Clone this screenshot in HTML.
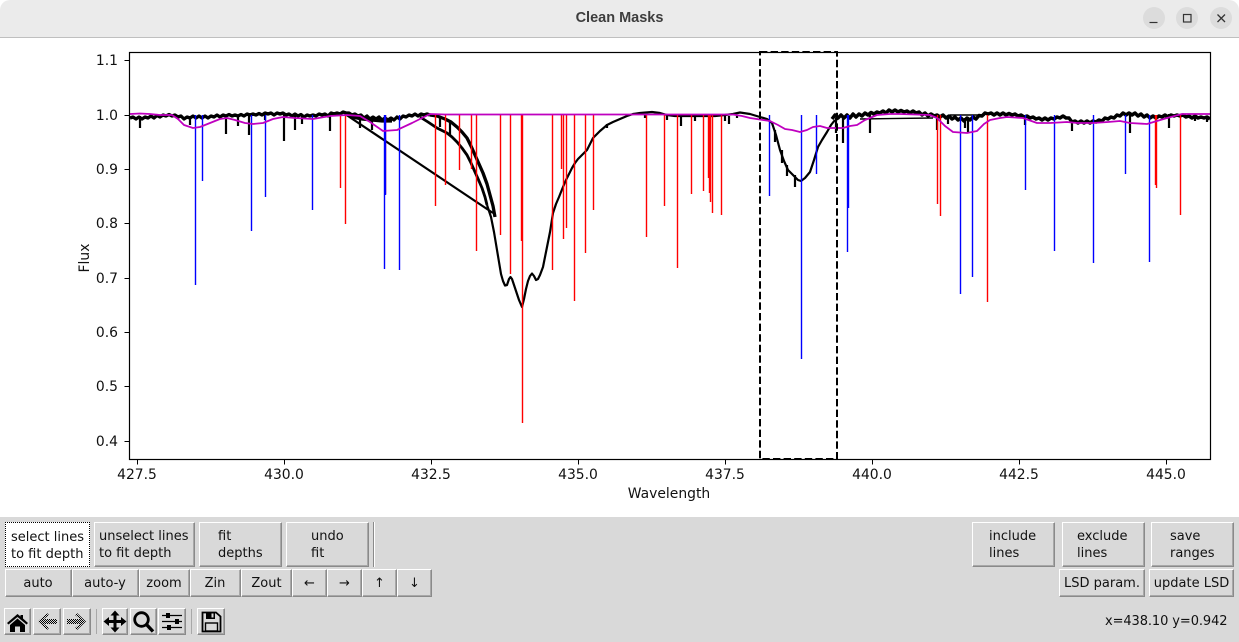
<!DOCTYPE html>
<html><head><meta charset="utf-8"><title>Clean Masks</title>
<style>
html,body{margin:0;padding:0;width:1239px;height:642px;overflow:hidden;background:#fff}
#t{position:absolute;left:0;top:0;width:1239px;height:37px;background:#ebebeb;border-bottom:1px solid #bfbfbf;border-radius:10px 10px 0 0;box-sizing:content-box}
#t span{position:absolute;left:0;width:1239px;top:10px;text-align:center;font:bold 14.500px "Liberation Sans",sans-serif;color:#3d3d3d}
#p{position:absolute;left:0;top:517px;width:1239px;height:125px;background:#d9d9d9}
.b{position:absolute;box-sizing:border-box;background:#d9d9d9;border:1px solid;border-color:#fff #8a8a8a #8a8a8a #fff;box-shadow:inset -1px -1px 0 #a8a8a8}
.l{position:absolute;font:13px/17px "DejaVu Sans",sans-serif;color:#111;white-space:pre}
.c{position:absolute;text-align:center;font:13px/17px "DejaVu Sans",sans-serif;color:#111}
svg{position:absolute;left:0;top:0}
</style></head><body>
<div id="t"><span>Clean Masks</span></div>
<div id="p"></div>
<svg width="1239" height="642" viewBox="0 0 1239 642" fill="none">
<circle cx="1154" cy="18" r="11" fill="#dcdcdc"/><circle cx="1187" cy="18" r="11" fill="#dcdcdc"/><circle cx="1221" cy="18" r="11" fill="#dcdcdc"/>
<path d="M1149.500 22.500h8" stroke="#333" stroke-width="1.200"/>
<rect x="1183.500" y="14.500" width="7.500" height="7.500" stroke="#333" stroke-width="1.200"/>
<path d="M1217.500 14.500l7.500 7.500M1225 14.500l-7.500 7.500" stroke="#333" stroke-width="1.300"/>

<!-- black spectrum -->
<path stroke="#000" stroke-width="3.300" stroke-linejoin="round" d="M130 118L133 117L136 119L139 117L142 119L145 117L148 118L151 116L154 118L157 115.500L160 117L163 115L166 116L169 114.500L172 116L175 115L178 117L181 116L184 119L187 117L190 118L193 116L196 118L199 116L202 118L205 116L208 118L211 116L214 117L217 115L220 117L223 115L226 116L229 114.500L232 116L235 115L238 116L241 114.500L244 116L247 114L250 115L253 114L256 115L259 113.500L262 115L265 113L268 114L271 113L274 115L277 113L280 114L283 113L286 115L289 114L292 116L295 114L298 116L301 114.500L304 117L307 115L310 116L313 115L316 116L319 114L322 115L325 114L328 116L331 113L334 114L337 113L340 114L343 112L346 113L349 113L352 115L355 114L358 116L361 115L364 118L367 116L370 119L373 117L376 119L379 117L382 120L385 118L388 120L391 118L394 120L397 117L400 119L403 116L406 117L409 115L412 116L415 114L418 116L421 114L424 115L427 114L430 115"/>
<path stroke="#000" stroke-width="3.300" stroke-linejoin="round" d="M430 115L437 116L445 119L451 122L457 127L462 132L467 138L471 146L475 155L479 164L483 173L487 184L490 195L493 206L495 217"/>
<path stroke="#000" stroke-width="2.800" stroke-linejoin="round" d="M420 117L428 122L437 128L447 133L452 137L457 142L462 148L467 155L471 163L475 172L479 181L482 188L485 197L487 205"/>
<path stroke="#000" stroke-width="2.200" stroke-linejoin="round" d="M345 114L493 213M487 205L491 217L494 232L497 250L499 262L501 274L503 281L505 285.500L507 285L509 279L510.500 277L512 279L514 285L516 291L519 300L522 307L524 299L526 289L528 281L530 276L532 273.500L534 276L536 280L538 279L540 275L543 267L546 252L550 232L553 213L556 204L559 197L563 187L566 180L569 174L572 168L575 163L578 159L581 156L587 150L590 144L593 138L600 131L607 125L613 122L620 119L627 116L633 114L640 113L646 112.500L652 112L660 113L667 115L675 116L685 116L695 116L705 116L715 116L725 115L733 114L740 112.500L750 114L760 117L767 119L772 123L776 135L780 150L784 161L788 170L792 174L795 177L798 180L801 181L805 178L810 172L814 160L818 147L822 140L827 132L831 125L835 120"/>
<path stroke="#000" stroke-width="3.500" stroke-linejoin="round" d="M832 119L835 115L838 118L841 115L844 118L847 115L850 118L853 114L856 117L859 114L862 116L865 113L868 115L871 112.500L874 114L877 112L880 113L883 111L886 113L889 110L892 112L895 110L898 112L901 110.500L904 112L907 111L910 113L913 111L916 113L919 112L922 115L925 113L928 116L931 114L934 116L937 115L940 117L943 115L946 118L949 116L952 119L955 117L958 120L961 118L964 121L967 118L970 120L973 117L976 119L979 115.500L982 116L985 113L988 114L991 113L994 115L997 113L1000 115L1003 113L1006 115L1009 113.500L1012 115L1015 114L1018 116L1021 115L1024 117L1027 116L1030 118L1033 117L1036 119L1039 118L1042 120L1045 118L1048 120L1051 118L1054 119L1057 117L1060 118L1063 116L1066 118L1069 118L1072 122L1075 121L1078 123L1081 121L1084 123L1087 121L1090 123L1093 121L1096 122L1099 120L1102 121L1105 118L1108 119L1111 117L1114 118L1117 115L1120 116L1123 113L1126 115L1129 113L1132 115L1135 113L1138 116L1141 114L1144 117L1147 115L1150 118L1153 116L1156 118L1159 116L1162 117L1165 115L1168 117L1171 115L1174 116L1177 115L1180 116L1183 115L1186 117L1189 116L1192 118L1195 116L1198 118L1201 117L1204 118L1207 117L1210 119"/>
<path stroke="#000" stroke-width="1.400" d="M860 119L933 118M950 115L985 115"/>
<path stroke="#000" stroke-width="3.300" d="M346 113L352 117L362 119L372 120L382 121L392 121"/>
<!-- absorption spikes -->
<path stroke="#000" stroke-width="2.200" d="M140 116V128M190 116V125M226 115V134M238 115V126M249 115V135M265 115V120M284 113V141M295 114V130M302 114V124M330 114V131M360 116V128M372 117V130M440 118V127M450 122V136M607 124V128M645 114V118M667 115V120M681 115V126M695 115V121M725 116V121M729 116V124M737 115V118M775 130V142M782 150V163M787 165V176M795 175V187M836 118V133M843 118V143M870 115V133M937 115V130M948 116V124M965 118V128M968 118V133M1025 116V125M1072 120V131M1130 114V133M1169 114V128M1195 116V121M1207 116V122"/>

<!-- red lines -->
<path stroke="#f00" stroke-width="1.400" d="M340.500 115V188M345.500 115V224M385.500 115V194M435.500 115V206M445.500 115V185M459.500 115V170M471.500 115V169M476.500 115V251M500.500 115V235M510.500 115V274M521.500 115V241M522.500 115V423M552.500 115V270M561.500 115V169M563.500 115V239M566.500 115V228M574.500 115V301M585.500 115V253M593.500 115V210M646.500 115V237M664.500 115V206M677.500 115V268M691.500 115V194M703.500 115V191M708.500 115V178M709.500 115V193M710.500 115V202M712.500 115V213M721.500 115V215M937.500 115V204M940.500 115V216M987.500 115V302M1155.500 115V185M1156.500 115V188M1180.500 115V215"/>
<!-- blue lines -->
<path stroke="#00f" stroke-width="1.400" d="M195.500 115V285M202.500 115V181M251.500 115V231M265.500 115V197M312.500 115V210M384.500 115V269M385.500 115V195M399.500 115V270M769.500 115V196M801.500 115V359M816.500 115V174M847.500 115V252M848.500 115V208M847.800 115V208M960.500 115V294M972.500 115V277M1025.500 115V190M1054.500 115V251M1093.500 115V263M1125.500 115V174M1149.500 115V262"/>
<!-- magenta -->
<path stroke="#bf00bf" stroke-width="1.800" stroke-linejoin="round" d="M130 114L140 113.500L150 114L160 115L172 115L178 119L184 125L193 128L200 127L210 123L220 119L227 118L235 120L245 123L253 124L263 123L273 119L283 117L295 118L313 119L330 116L347 115L360 116L370 122L383 131L397 130L412 123L430 114L445 114.500L463 114.500L600 114.500L733 114.500L742 116L750 118L770 121L778 125L785 129L792 130L800 132L807 130L813 127L820 126L827 128L835 128L843 128L850 126L857 125L865 120L877 115L890 114L900 114L930 115L937 118L945 126L953 132L967 133L977 131L984 124L990 120L1000 118L1007 117L1023 118L1037 123L1050 123L1067 122L1077 123L1093 123L1108 122L1120 121L1130 123L1147 124L1157 121L1167 118L1182 114L1195 114L1210 114"/>
<!-- dashed selector -->
<path stroke="#000" stroke-width="2" stroke-dasharray="7.400 3.200" d="M760 52H837V459H760Z"/>
<!-- axes -->
<rect x="129.500" y="52.500" width="1081" height="407" stroke="#000" stroke-width="1.200"/>
<path stroke="#000" stroke-width="1" d="M124.500 60.500h5M124.500 115.500h5M124.500 169.500h5M124.500 223.500h5M124.500 278.500h5M124.500 332.500h5M124.500 386.500h5M124.500 441.500h5M137.500 459.500v5M284.500 459.500v5M431.500 459.500v5M578.500 459.500v5M725.500 459.500v5M872.500 459.500v5M1019.500 459.500v5M1166.500 459.500v5"/>
<g font-family="'DejaVu Sans',sans-serif" font-size="13.900" fill="#111" stroke="none">
<g text-anchor="end"><text x="118" y="65">1.1</text><text x="118" y="120">1.0</text><text x="118" y="174">0.9</text><text x="118" y="228">0.8</text><text x="118" y="283">0.7</text><text x="118" y="337">0.6</text><text x="118" y="391">0.5</text><text x="118" y="446">0.4</text></g>
<g text-anchor="middle"><text x="137" y="479">427.5</text><text x="284" y="479">430.0</text><text x="431" y="479">432.5</text><text x="578" y="479">435.0</text><text x="725" y="479">437.5</text><text x="872" y="479">440.0</text><text x="1019" y="479">442.5</text><text x="1166" y="479">445.0</text>
<text x="669" y="498">Wavelength</text>
<text transform="translate(89 258) rotate(-90)">Flux</text></g>
</g>
</svg>

<!-- row 1 -->
<div class="b" style="left:5px;top:522px;width:85px;height:45px;background:#fff;border:1px dotted #000;box-shadow:none"></div>
<div class="l" style="left:11px;top:529px">select lines
to fit depth</div>
<div class="b" style="left:94px;top:522px;width:101px;height:45px"></div>
<div class="l" style="left:99px;top:528px">unselect lines
to fit depth</div>
<div class="b" style="left:199px;top:522px;width:83px;height:45px"></div>
<div class="l" style="left:218px;top:528px">fit
depths</div>
<div class="b" style="left:286px;top:522px;width:83px;height:45px"></div>
<div class="l" style="left:311px;top:528px">undo
fit</div>
<div style="position:absolute;left:373px;top:522px;width:1px;height:45px;background:#8a8a8a;border-right:1px solid #fff"></div>
<div class="b" style="left:972px;top:522px;width:83px;height:45px"></div>
<div class="l" style="left:989px;top:528px">include
lines</div>
<div class="b" style="left:1062px;top:522px;width:83px;height:45px"></div>
<div class="l" style="left:1077px;top:528px">exclude
lines</div>
<div class="b" style="left:1151px;top:522px;width:83px;height:45px"></div>
<div class="l" style="left:1170px;top:528px">save
ranges</div>

<!-- row 2 -->
<div class="b" style="left:5px;top:569px;width:67px;height:28px"></div><div class="c" style="left:5px;top:575px;width:66px">auto</div>
<div class="b" style="left:72px;top:569px;width:67px;height:28px"></div><div class="c" style="left:72px;top:575px;width:66px">auto-y</div>
<div class="b" style="left:139px;top:569px;width:51px;height:28px"></div><div class="c" style="left:139px;top:575px;width:50px">zoom</div>
<div class="b" style="left:190px;top:569px;width:51px;height:28px"></div><div class="c" style="left:190px;top:575px;width:50px">Zin</div>
<div class="b" style="left:241px;top:569px;width:51px;height:28px"></div><div class="c" style="left:241px;top:575px;width:51px">Zout</div>
<div class="b" style="left:292px;top:569px;width:35px;height:28px"></div><div class="c" style="left:292px;top:575px;width:35px">←</div>
<div class="b" style="left:327px;top:569px;width:35px;height:28px"></div><div class="c" style="left:327px;top:575px;width:35px">→</div>
<div class="b" style="left:362px;top:569px;width:35px;height:28px"></div><div class="c" style="left:362px;top:575px;width:35px">↑</div>
<div class="b" style="left:397px;top:569px;width:35px;height:28px"></div><div class="c" style="left:397px;top:575px;width:35px">↓</div>
<div class="b" style="left:1059px;top:569px;width:86px;height:28px"></div><div class="c" style="left:1059px;top:575px;width:86px">LSD param.</div>
<div class="b" style="left:1149px;top:569px;width:85px;height:28px"></div><div class="c" style="left:1149px;top:575px;width:85px">update LSD</div>

<!-- toolbar -->
<div class="b" style="left:4px;top:608px;width:27px;height:27px"></div>
<div class="b" style="left:33px;top:608px;width:28px;height:27px"></div>
<div class="b" style="left:63px;top:608px;width:28px;height:27px"></div>
<div style="position:absolute;left:96px;top:609px;width:1px;height:25px;background:#a8a8a8"></div>
<div class="b" style="left:102px;top:608px;width:26px;height:27px"></div>
<div class="b" style="left:130px;top:608px;width:27px;height:27px"></div>
<div class="b" style="left:158px;top:608px;width:28px;height:27px"></div>
<div style="position:absolute;left:191px;top:609px;width:1px;height:25px;background:#a8a8a8"></div>
<div class="b" style="left:197px;top:608px;width:28px;height:27px"></div>
<svg width="1239" height="642" viewBox="0 0 1239 642" fill="none">
<defs><pattern id="e" width="2" height="2" patternUnits="userSpaceOnUse"><rect width="1" height="1" fill="#000"/><rect x="1" y="1" width="1" height="1" fill="#000"/></pattern></defs>
<!-- home -->
<path fill="#000" d="M7 623L17.500 614L20.500 616.500V615H23V618.500L28 623L26.500 624.500L17.500 617L8.500 624.500ZM10 625L17.500 618.500L25 625V632H20V626.500H15V632H10Z"/>
<!-- back / forward -->
<path fill="url(#e)" d="M38 621.500L47 613L49 615L44 619H57V624H44L49 628L47 630Z"/>
<path fill="url(#e)" d="M86 621.500L77 613L75 615L80 619H67V624H80L75 628L77 630Z"/>
<!-- pan -->
<path fill="#000" d="M115 610.500L119.500 615.500H116.500V620H121V617L126.500 621.500L121 626V623H116.500V627.500H119.500L115 632.500L110.500 627.500H113.500V623H109V626L103.500 621.500L109 617V620H113.500V615.500H110.500Z"/>
<!-- zoom -->
<circle cx="141.500" cy="619.500" r="6.800" stroke="#000" stroke-width="2.800"/>
<path d="M146.500 624.500L153 631.500" stroke="#000" stroke-width="3.400"/>
<!-- sliders -->
<path stroke="#000" stroke-width="1.200" d="M162 615.500H182M162 621.500H182M162 627.500H182" />
<path fill="#000" d="M166 613h4v5h-4zM175 619h4v5h-4zM167 625h4v5h-4z"/>
<!-- save -->
<path d="M202.500 612.500H216L220.500 616.500V631.500H202.500Z" stroke="#000" stroke-width="1.800"/>
<path fill="#000" d="M206 612h9v7h-9z"/><path fill="#d9d9d9" d="M211.500 613.500h2v4h-2z"/>
<rect x="205.500" y="623" width="12" height="8" stroke="#000" stroke-width="1.400"/>
</svg>
<div class="l" style="left:1105px;top:613px;letter-spacing:-.1px">x=438.10 y=0.942</div>
</body></html>
